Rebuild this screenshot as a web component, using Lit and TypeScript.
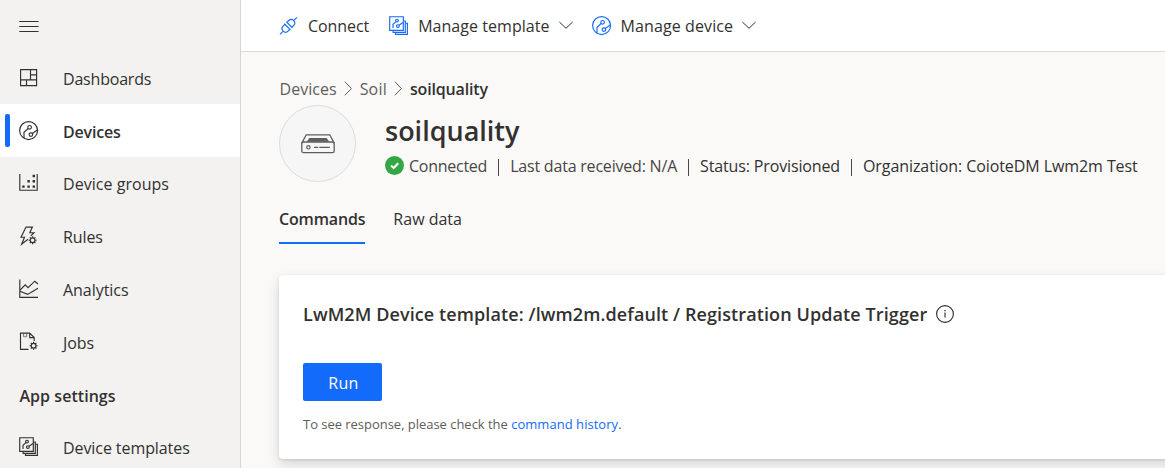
import { LitElement, html, svg, css, nothing } from "lit";
import { customElement, property } from "lit/decorators.js";
import { classMap } from "lit/directives/class-map.js";

const gear = (cx: number, cy: number) => svg`
  <g transform="translate(${cx} ${cy})">
    <circle r="2.4" />
    <path d="M0-4v1.5M0 4V2.5M-4 0h1.5M4 0H2.5M-2.8-2.8l1 1M2.8 2.8l-1-1M-2.8 2.8l1-1M2.8-2.8l-1 1" />
  </g>`;

const glyphs: Record<string, unknown> = {
  menu: svg`<path d="M.3 2.5h19.3M.3 7.5h19.3M.3 12.5h19.3" />`,
  dashboards: svg`<path d="M1.6 1.6h16v16h-16zM11.5 1.6v10.3M1.6 11.9h16M11.5 6.8h6M7.5 11.9v5.7" />`,
  devices: svg`
    <circle cx="9.6" cy="9.6" r="9" />
    <circle cx="10.6" cy="6.3" r="1.8" /><circle cx="11.9" cy="13.6" r="1.8" />
    <path d="M9.2 7.5L5 11.2V17M13.3 12.4L18.3 9.1" />`,
  groups: svg`
    <path d="M.8 1v16.2h17.4V1" />
    <path class="solid" d="M3.2 12.4h2.4v2.4H3.2zM8.4 12.4h2.4v2.4H8.4zM13.6 12.4H16v2.4h-2.4zM8.4 7h2.4v2.4H8.4zM13.6 7H16v2.4h-2.4zM13.6 1.8H16v2.4h-2.4z" />`,
  rules: svg`
    <path d="M9 13.2L2.6 18.2L5.5 11.2H2L7 1.1H13.4L10.8 6.7H15L11.8 9.8" />
    ${gear(13.6, 14.2)}`,
  analytics: svg`
    <path d="M.8 .5v17.9H19M1 11.2L6.2 5.8L9 8.6L15.8 2.2L19 5M1 12.2L8.6 15.4L19 9.2" />`,
  jobs: svg`
    <path d="M9.5 17.4H1.5V1.1H10.7L15.2 5.6V9M10.7 1.1V5.6H15.2" />
    <path d="M4.6 1.5v3.2M7.6 1.5v3.2M4.6 4.7h3" opacity=".6" />
    ${gear(14.6, 13.7)}`,
  templates: svg`
    <path d="M.7 .7h13.6v13.6H.7zM4.1 14.4v1.9h12.2V5h-1.9M6.5 16.4v2h11.9V7.2h-2" />
    <circle cx="8" cy="4.6" r="1.4" /><circle cx="8.9" cy="10.1" r="1.4" />
    <path d="M6.9 5.6L4 8.2V12M10 9.2L14 6.6" />`,
  connect: svg`
    <g transform="translate(9.4 9.8) rotate(-45)">
      <path d="M-12 0h4.6M7.4 0H12M-1.4-4.3v8.6M1.4-4.3v8.6M-1.4-3.5H-4a3.4 3.5 0 0 0 0 7h2.6M1.4-3.5H4a3.4 3.5 0 0 1 0 7H1.4" />
    </g>`,
  down: svg`<path stroke-width="1" d="M.4 1L7 7.3L13.6 1" />`,
  right: svg`<path stroke-width="1" d="M.8 .7L7.4 7.5L.8 14.3" />`,
  info: svg`
    <circle cx="9" cy="9" r="8.4" />
    <path d="M9 7.6v5" /><path class="solid" d="M8.3 4.9h1.4v1.4H8.3z" />`,
  check: svg`
    <circle class="disc" cx="9.5" cy="9.5" r="9.5" />
    <path class="tick" d="M6 9.6L8.6 12L13.2 7.2" />`,
  gateway: svg`
    <path stroke-width="1.3" d="M.7 9.4L5.2 .8H28.8L33.3 9.4" />
    <rect stroke-width="1.3" x=".8" y="8" width="32.4" height="10.6" rx="1.6" />
    <path class="solid" d="M8.4 4.1H25.6L28.3 7.8H5.7z" />
    <circle cx="7.4" cy="13.3" r="1.7" />
    <path stroke-width="1.3" d="M13 13.3h4.2M18.3 13.3h10.6" />`,
};

@customElement("ui-icon")
class UiIcon extends LitElement {
  static styles = css`
    :host { display: inline-flex; flex: none; }
    svg { display: block; overflow: visible; fill: none; stroke: currentColor; stroke-width: 1.15; }
    .solid { fill: currentColor; stroke: none; }
    .disc { fill: #34a745; stroke: none; }
    .tick { stroke: #fff; stroke-width: 2; }
  `;
  @property() name = "";
  @property({ type: Number }) w = 20;
  @property({ type: Number }) h = 20;

  render() {
    return html`<svg width=${this.w} height=${this.h} viewBox="0 0 ${this.w} ${this.h}">${glyphs[this.name]}</svg>`;
  }
}

interface NavEntry {
  label: string;
  icon?: string;
  active?: boolean;
  tracking: number;
}

const navigation: NavEntry[] = [
  { label: "Dashboards", icon: "dashboards", tracking: -0.2 },
  { label: "Devices", icon: "devices", active: true, tracking: -0.19 },
  { label: "Device groups", icon: "groups", tracking: 0.04 },
  { label: "Rules", icon: "rules", tracking: -0.1 },
  { label: "Analytics", icon: "analytics", tracking: -0.05 },
  { label: "Jobs", icon: "jobs", tracking: -0.05 },
  { label: "App settings", tracking: 0.04 },
  { label: "Device templates", icon: "templates", tracking: -0.08 },
];

@customElement("side-nav")
class SideNav extends LitElement {
  static styles = css`
    :host { display: block; width: 240px; background: #f3f2f0; border-right: 1px solid #d6d6d6; color: #323130; }
    .toggle { display: flex; height: 32px; padding: 19px 0 0 19px; }
    .row { display: flex; align-items: center; height: 52.8px; box-sizing: border-box; padding: 0 0 0 19px; }
    .row ui-icon { margin-top: 1px; }
    .label { margin-left: 24px; line-height: 22px; padding-top: 2.8px; }
    .active { background: #fff; font-weight: 600; padding-left: 5px; }
    .marker { width: 5px; height: 33px; border-radius: 2px; background: #136bfb; margin-right: 9px; }
    .heading { font-weight: 600; }
    .heading .label { margin-left: 0.5px; }
  `;

  render() {
    return html`
      <div class="toggle"><ui-icon name="menu" h="15"></ui-icon></div>
      ${navigation.map(
        (n) => html`
          <div class=${classMap({ row: true, active: !!n.active, heading: !n.icon })}>
            ${n.active ? html`<span class="marker"></span>` : nothing}
            ${n.icon ? html`<ui-icon name=${n.icon}></ui-icon>` : nothing}
            <span class="label" style="letter-spacing:${n.tracking}px">${n.label}</span>
          </div>
        `
      )}
    `;
  }
}

@customElement("app-root")
class AppRoot extends LitElement {
  static styles = css`
    :host {
      display: flex; width: 1165px; height: 468px; overflow: hidden;
      font: 16px/22px "Open Sans", "Noto Sans", sans-serif;
      color: #323130; background: #faf9f8;
    }
    main { flex: 1; min-width: 0; }
    .bar { display: flex; align-items: center; height: 51px; padding-left: 38px; background: #fff; border-bottom: 1px solid #dadada; white-space: nowrap; }
    .bar ui-icon.blue { color: #136bfb; }
    .bar .text { padding-top: 1px; }
    .connect { margin: 0 20px 0 9px; letter-spacing: -0.08px; }
    .template { margin: 0 9px; letter-spacing: 0.05px; }
    .device { margin: 0 9px; letter-spacing: 0.1px; }
    .bar .chev { margin-top: -2px; }
    .gap { margin-right: 19px; }

    .content { padding: 25px 0 0 38px; white-space: nowrap; }
    .crumbs { display: flex; align-items: center; height: 24px; color: #605e5c; }
    .crumbs ui-icon { margin: 0 7.5px 1px; }
    .crumbs .current { font-weight: 600; color: #323130; letter-spacing: -0.16px; }
    .crumbs .first { margin-left: 0.6px; letter-spacing: 0.02px; }
    .crumbs .second { letter-spacing: 0.19px; }

    .identity { display: flex; margin-top: 4px; }
    .avatar { display: flex; align-items: center; justify-content: center; width: 75px; height: 75px; border: 1px solid #dcdcdc; border-radius: 50%; background: #f6f6f6; color: #605e5c; }
    .facts { margin-left: 29px; }
    .title { margin: 7px 0 0; font-size: 27px; line-height: 38px; font-weight: 600; }
    .status { display: flex; align-items: center; height: 22px; margin-top: 5px; }
    .status ui-icon { margin: -1px 5px 0 0; }
    .muted { color: #484644; }
    .s1 { letter-spacing: -0.26px; }
    .s2 { letter-spacing: -0.2px; }
    .s3 { letter-spacing: -0.14px; }
    .s4 { letter-spacing: -0.08px; }
    .sep { width: 1px; height: 17px; margin: 2px 11px 0; background: #484644; }

    .tabs { display: flex; gap: 28px; margin-top: 25px; height: 37px; }
    .tab { height: 35px; line-height: 24px; letter-spacing: 0; }
    .selected { font-weight: 600; letter-spacing: -0.16px; border-bottom: 2px solid #136bfb; }

    .card { margin-top: 31px; height: 184px; box-sizing: border-box; padding: 26px 24px 0; background: #fff; border-radius: 4px; margin-right: -10px; box-shadow: 0 6px 14px rgba(0,0,0,.13), 0 1px 3px rgba(0,0,0,.12); }
    .name { display: flex; align-items: center; margin: 0; font-size: 18px; line-height: 26px; font-weight: 600; letter-spacing: 0.1px; }
    .name ui-icon { margin-left: 9px; }
    .run { display: block; width: 79px; height: 38px; margin: 36px 0 0; padding: 2px 0 0 2px; border: 0; border-radius: 2px; background: #136bfb; color: #fff; font: inherit; letter-spacing: .3px; }
    .note { margin: 13px 0 0; font-size: 13px; line-height: 20px; color: #605e5c; letter-spacing: -.03px; }
    .note a { color: #136bfb; text-decoration: none; letter-spacing: 0.04px; }
  `;

  render() {
    return html`
      <side-nav></side-nav>
      <main>
        <div class="bar">
          <ui-icon class="blue" name="connect"></ui-icon><span class="text connect">Connect</span>
          <ui-icon class="blue" name="templates"></ui-icon><span class="text template">Manage template</span>
          <ui-icon class="chev gap" name="down" w="14" h="8"></ui-icon>
          <ui-icon class="blue" name="devices"></ui-icon><span class="text device">Manage device</span>
          <ui-icon class="chev" name="down" w="14" h="8"></ui-icon>
        </div>
        <div class="content">
          <nav class="crumbs">
            <span class="first">Devices</span><ui-icon name="right" w="8" h="15"></ui-icon>
            <span class="second">Soil</span><ui-icon name="right" w="8" h="15"></ui-icon>
            <span class="current">soilquality</span>
          </nav>
          <div class="identity">
            <div class="avatar"><ui-icon name="gateway" w="34" h="19"></ui-icon></div>
            <div class="facts">
              <h1 class="title">soilquality</h1>
              <div class="status">
                <ui-icon name="check" w="19" h="19"></ui-icon>
                <span class="muted s1">Connected</span><i class="sep"></i>
                <span class="muted s2">Last data received: N/A</span><i class="sep"></i>
                <span class="s3">Status: Provisioned</span><i class="sep"></i>
                <span class="s4">Organization: CoioteDM Lwm2m Test</span>
              </div>
            </div>
          </div>
          <div class="tabs">
            <div class="tab selected">Commands</div>
            <div class="tab">Raw data</div>
          </div>
          <section class="card">
            <h2 class="name">LwM2M Device template: /lwm2m.default / Registration Update Trigger<ui-icon name="info" w="18" h="18"></ui-icon></h2>
            <button class="run">Run</button>
            <p class="note">To see response, please check the <a>command history</a>.</p>
          </section>
        </div>
      </main>
    `;
  }
}
